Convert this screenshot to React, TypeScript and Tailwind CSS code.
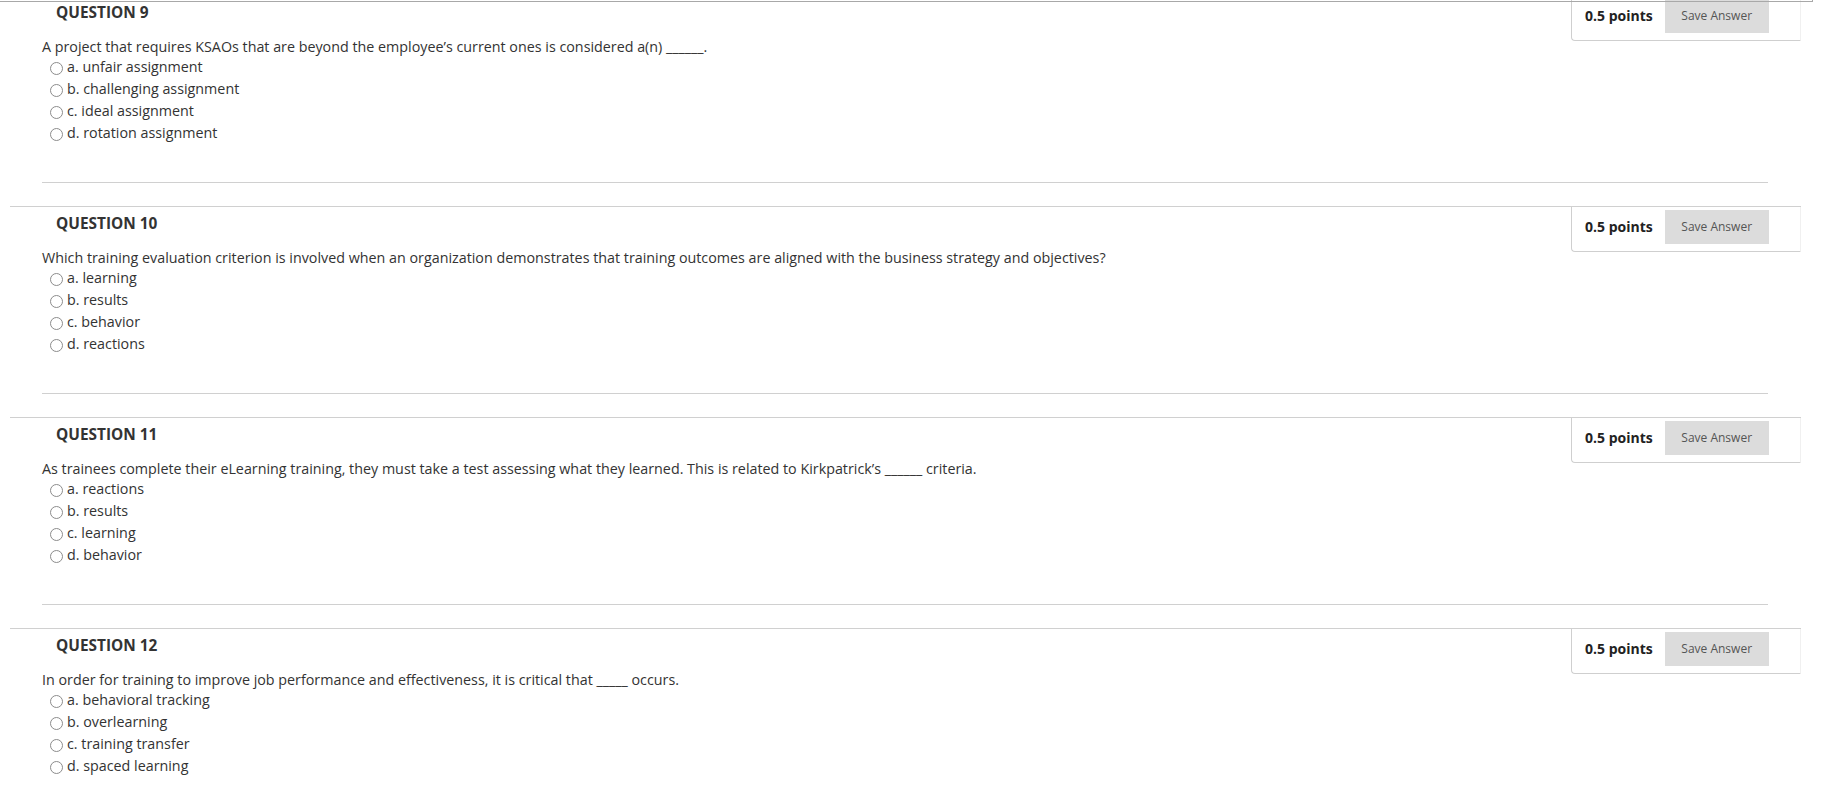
import React from "react";

type Q = { num: number; text: string; options: string[] };

const questions: Q[] = [
  {
    num: 9,
    text: "A project that requires KSAOs that are beyond the employee\u2019s current ones is considered a(n) ______.",
    options: ["a. unfair assignment", "b. challenging assignment", "c. ideal assignment", "d. rotation assignment"],
  },
  {
    num: 10,
    text: "Which training evaluation criterion is involved when an organization demonstrates that training outcomes are aligned with the business strategy and objectives?",
    options: ["a. learning", "b. results", "c. behavior", "d. reactions"],
  },
  {
    num: 11,
    text: "As trainees complete their eLearning training, they must take a test assessing what they learned. This is related to Kirkpatrick\u2019s ______ criteria.",
    options: ["a. reactions", "b. results", "c. learning", "d. behavior"],
  },
  {
    num: 12,
    text: "In order for training to improve job performance and effectiveness, it is critical that _____ occurs.",
    options: ["a. behavioral tracking", "b. overlearning", "c. training transfer", "d. spaced learning"],
  },
];

function Question({ q, first }: { q: Q; first: boolean }) {
  return (
    <li className={`ml-[10px] w-[1791px] border-t border-[#d0d0d0] h-[211px] ${first ? "-mt-[5px]" : ""}`}>
      <div className="float-right w-[230px] h-[45px] border-l border-b border-r border-l-[#cfcfcf] border-b-[#cfcfcf] border-r-[#f0f0f0] rounded-bl-[4px] pt-[3px] pl-[13px] flex items-start gap-[12px]">
        <span className="h-[34px] leading-[34px] text-[14px] font-bold text-[#222]">0.5 points</span>
        <button className="w-[104px] h-[34px] bg-[#dcdcdc] text-[12px] text-[#555] leading-[34px] text-center">
          Save Answer
        </button>
      </div>
      <div className="pl-[46px] pt-[7px]">
        <h3 className="h-[20px] leading-[20px] text-[15.4px] font-bold text-[#333]">QUESTION {q.num}</h3>
      </div>
      <div className="pl-[32px]">
        <p className="leading-[18px] text-[14.3px] text-[#333] mt-[15px]">{q.text}</p>
        <ul>
          {q.options.map((o) => (
            <li key={o} className="h-[22px] flex items-center pl-[8px]">
              <span className="w-[13px] h-[13px] rounded-full border border-[#8c8c8c] bg-white mt-[2px]" />
              <span className="ml-[4px] text-[14.3px] text-[#333] leading-[22px]">{o}</span>
            </li>
          ))}
        </ul>
      </div>
      <div className="clear-both" />
      <div className="ml-[32px] mr-[33px] border-t border-[#d0d0d0] mt-[38px]" />
    </li>
  );
}

export default function App() {
  return (
    <div
      className="relative w-[1822px] h-[785px] overflow-hidden bg-white"
      style={{ fontFamily: '"Open Sans", "Noto Sans", sans-serif' }}
    >
      <ul>
        {questions.map((q, i) => (
          <Question key={q.num} q={q} first={i === 0} />
        ))}
      </ul>
      <div className="absolute top-0 left-0 w-[1813px] h-[2px] border-b border-r border-[#a8a8a8]" />
    </div>
  );
}
